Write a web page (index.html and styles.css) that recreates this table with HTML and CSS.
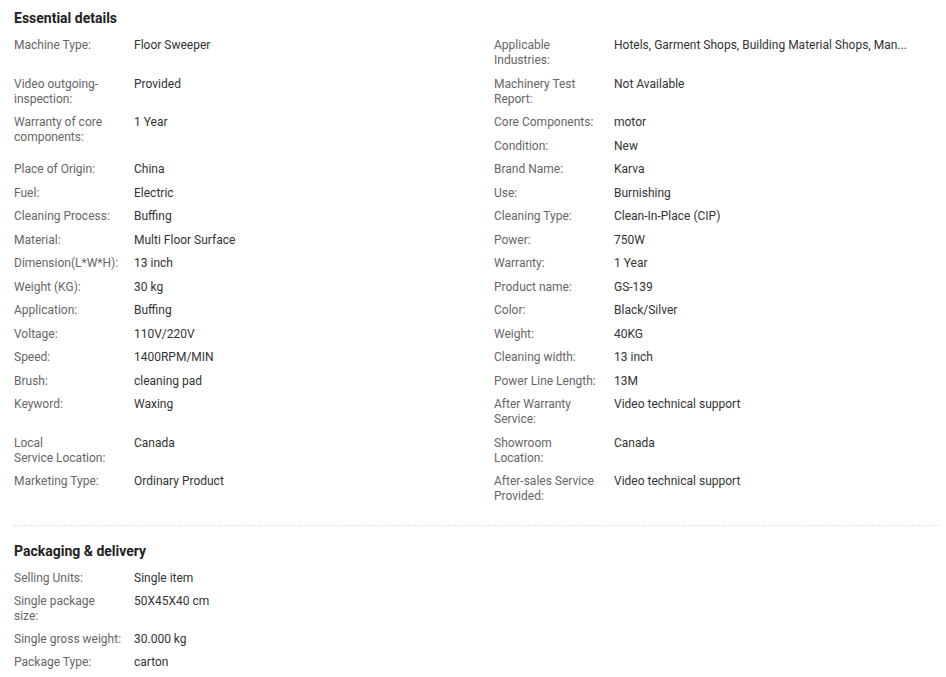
FILE: index.html
```html
<!DOCTYPE html>
<html>
<head>
<meta charset="utf-8">
<link rel="stylesheet" href="styles.css">
</head>
<body>
<div class="page">
  <section class="section">
    <h2 class="title">Essential details</h2>
    <div class="attrs">
      <div class="attr"><div class="label">Machine Type:</div><div class="value">Floor Sweeper</div></div>
      <div class="attr"><div class="label">Applicable Industries:</div><div class="value">Hotels, Garment Shops, Building Material Shops, Man...</div></div>
      <div class="attr"><div class="label">Video outgoing-inspection:</div><div class="value">Provided</div></div>
      <div class="attr"><div class="label">Machinery Test Report:</div><div class="value">Not Available</div></div>
      <div class="attr span2"><div class="label">Warranty of core components:</div><div class="value">1 Year</div></div>
      <div class="attr"><div class="label">Core Components:</div><div class="value">motor</div></div>
      <div class="attr"><div class="label">Condition:</div><div class="value">New</div></div>
      <div class="attr"><div class="label">Place of Origin:</div><div class="value">China</div></div>
      <div class="attr"><div class="label">Brand Name:</div><div class="value">Karva</div></div>
      <div class="attr"><div class="label">Fuel:</div><div class="value">Electric</div></div>
      <div class="attr"><div class="label">Use:</div><div class="value">Burnishing</div></div>
      <div class="attr"><div class="label">Cleaning Process:</div><div class="value">Buffing</div></div>
      <div class="attr"><div class="label">Cleaning Type:</div><div class="value">Clean-In-Place (CIP)</div></div>
      <div class="attr"><div class="label">Material:</div><div class="value">Multi Floor Surface</div></div>
      <div class="attr"><div class="label">Power:</div><div class="value">750W</div></div>
      <div class="attr"><div class="label">Dimension(L*W*H):</div><div class="value">13 inch</div></div>
      <div class="attr"><div class="label">Warranty:</div><div class="value">1 Year</div></div>
      <div class="attr"><div class="label">Weight (KG):</div><div class="value">30 kg</div></div>
      <div class="attr"><div class="label">Product name:</div><div class="value">GS-139</div></div>
      <div class="attr"><div class="label">Application:</div><div class="value">Buffing</div></div>
      <div class="attr"><div class="label">Color:</div><div class="value">Black/Silver</div></div>
      <div class="attr"><div class="label">Voltage:</div><div class="value">110V/220V</div></div>
      <div class="attr"><div class="label">Weight:</div><div class="value">40KG</div></div>
      <div class="attr"><div class="label">Speed:</div><div class="value">1400RPM/MIN</div></div>
      <div class="attr"><div class="label">Cleaning width:</div><div class="value">13 inch</div></div>
      <div class="attr"><div class="label">Brush:</div><div class="value">cleaning pad</div></div>
      <div class="attr"><div class="label">Power Line Length:</div><div class="value">13M</div></div>
      <div class="attr"><div class="label">Keyword:</div><div class="value">Waxing</div></div>
      <div class="attr"><div class="label">After Warranty Service:</div><div class="value">Video technical support</div></div>
      <div class="attr"><div class="label">Local<br>Service Location:</div><div class="value">Canada</div></div>
      <div class="attr"><div class="label">Showroom Location:</div><div class="value">Canada</div></div>
      <div class="attr"><div class="label">Marketing Type:</div><div class="value">Ordinary Product</div></div>
      <div class="attr"><div class="label">After-sales Service Provided:</div><div class="value">Video technical support</div></div>
    </div>
  </section>
  <section class="section second">
    <h2 class="title">Packaging &amp; delivery</h2>
    <div class="attrs single">
      <div class="attr"><div class="label">Selling Units:</div><div class="value">Single item</div></div>
      <div class="attr"><div class="label">Single package<br>size:</div><div class="value">50X45X40 cm</div></div>
      <div class="attr"><div class="label">Single gross weight:</div><div class="value">30.000 kg</div></div>
      <div class="attr"><div class="label">Package Type:</div><div class="value">carton</div></div>
    </div>
  </section>
</div>
</body>
</html>
```

FILE: styles.css
```css
html, body {
  margin: 0;
  padding: 0;
  background: #fff;
}
body {
  font-family: Roboto, "Liberation Sans", Arial, sans-serif;
  font-size: 12px;
  color: #333;
}
.page {
  padding: 8px 6px 0 14px;
}
.section {
  padding-bottom: 21px;
}
.section.second {
  border-top: 1px dashed #e4e4e4;
  padding-top: 15px;
}
.title {
  margin: 0 0 10px;
  font-size: 14px;
  line-height: 20px;
  font-weight: 700;
  color: #222;
}
.attrs {
  display: grid;
  grid-template-columns: 480px 1fr;
  row-gap: 8.5px;
}
.attrs.single {
  grid-template-columns: 480px;
  row-gap: 8px;
}
.attr {
  display: flex;
  line-height: 15px;
  min-width: 0;
}
.span2 {
  grid-row: span 2;
}
.label {
  width: 110px;
  flex: 0 0 110px;
  margin-right: 10px;
  color: #666;
}
.value {
  color: #333;
  min-width: 0;
  white-space: nowrap;
}
```
